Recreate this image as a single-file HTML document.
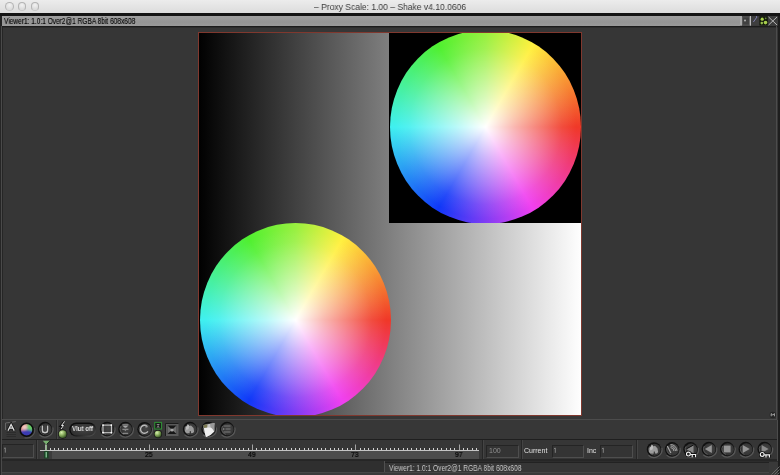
<!DOCTYPE html>
<html><head><meta charset="utf-8">
<style>
*{margin:0;padding:0;box-sizing:border-box}
html,body{width:780px;height:475px;overflow:hidden;background:#363636;font-family:"Liberation Sans",sans-serif}
.a{position:absolute}
#title{left:0;top:0;width:780px;height:13px;background:linear-gradient(#ececec,#dcdcdc)}
.tl{width:8.8px;height:8.8px;border-radius:50%;top:1.95px;background:radial-gradient(circle at 50% 30%,#f2f2f2 0,#dcdcdc 70%,#e8e8e8 100%);border:1px solid #b4b4b4;border-bottom-color:#c8c8c8}
#ttext{left:314px;top:1px;font-size:9.5px;color:#3a3a3a;white-space:nowrap;transform-origin:0 0;transform:scaleX(0.897);line-height:11px}
#blk{left:0;top:13px;width:780px;height:3px;background:#141414}
#hdr{left:2px;top:16px;width:776px;height:10px;background:linear-gradient(#a0a0a0,#959595 60%,#9a9a9a)}
#htext{left:3.5px;top:16px;font-size:8.4px;color:#000;-webkit-text-stroke:0.12px #000;white-space:nowrap;transform-origin:0 0;transform:scaleX(0.783);line-height:10px}
#view{left:0;top:26px;width:780px;height:393px;background:#363636}
#img{left:198px;top:32px;width:384px;height:384px;background:linear-gradient(90deg,#000,#fff);overflow:hidden}
#imgb{left:198px;top:32px;width:384px;height:384px;border:1px solid #80382e}
.quad{overflow:hidden}
.wheel{width:191px;height:194px;border-radius:50%;background:radial-gradient(closest-side,#fff 0%,rgba(255,255,255,.64) 30%,rgba(255,255,255,.32) 60%,rgba(255,255,255,.1) 80%,rgba(255,255,255,0) 95%),conic-gradient(#98f040 0deg,#fff040 30deg,#f03828 90deg,#f040f0 150deg,#1038f8 210deg,#40f0f0 270deg,#50f030 330deg,#98f040 360deg)}
.txt{white-space:nowrap;transform-origin:0 0}
.lab{will-change:transform}
.box{border-top:1px solid #242424;border-left:1px solid #242424;border-bottom:1px solid #4e4e4e;border-right:1px solid #4e4e4e;background:#343434}
body *{-webkit-font-smoothing:antialiased}
#ttext,#htext{will-change:transform}
</style></head><body>
<div id="title" class="a"></div>
<div class="a tl" style="left:4.8px"></div>
<div class="a tl" style="left:17.5px"></div>
<div class="a tl" style="left:30.5px"></div>
<div id="ttext" class="a">– Proxy Scale: 1.00 – Shake v4.10.0606</div>
<div id="blk" class="a"></div>
<div id="view" class="a"></div>
<div class="a" style="left:2px;top:26px;width:776px;height:1px;background:#1c1c1c"></div>
<div class="a" style="left:2px;top:27px;width:776px;height:1px;background:#2c2c2c"></div>
<div class="a" style="left:2px;top:27px;width:1px;height:392px;background:#262626"></div>
<div class="a" style="left:0;top:16px;width:2px;height:10px;background:#222"></div>
<div id="hdr" class="a"></div>
<div id="htext" class="a">Viewer1: 1.0:1 Over2@1 RGBA 8bit 608x608</div>

<div id="img" class="a">
  <div class="a" style="left:191px;top:0;width:193px;height:191px;background:#000"></div>
  <div class="a quad" style="left:191px;top:0;width:193px;height:191px">
    <div class="a wheel" style="left:0.5px;top:-2.3px"></div>
  </div>
  <div class="a quad" style="left:0;top:191px;width:194px;height:193px">
    <div class="a wheel" style="left:1.5px;top:-0.2px"></div>
  </div>
</div>
<div id="imgb" class="a"></div>

<!-- viewer bottom line -->
<div class="a" style="left:2px;top:419px;width:775px;height:1px;background:#4c4c4c"></div>
<!-- toolbar -->
<div class="a" style="left:2px;top:420px;width:776px;height:19px;background:#373737"></div>
<div class="a" style="left:0;top:439px;width:780px;height:1px;background:#1f1f1f"></div>
<!-- timeline row -->
<div class="a" style="left:2px;top:440px;width:776px;height:19px;background:#363636"></div>
<div class="a" style="left:0;top:459px;width:780px;height:2px;background:#262626"></div>
<!-- status -->
<div class="a" style="left:0;top:461px;width:780px;height:14px;background:#333"></div>
<div class="a" style="left:2px;top:461px;width:383px;height:12px;background:#2f2f2f"></div>
<div class="a" style="left:384px;top:461px;width:1px;height:12px;background:#505050"></div>
<div class="a" style="left:385px;top:461px;width:393px;height:1px;background:#2c2c2c"></div>
<div class="a" style="left:385px;top:462px;width:393px;height:1px;background:#222"></div>
<div class="a" style="left:385px;top:463px;width:393px;height:10px;background:#363636"></div>
<div class="a" style="left:0;top:472px;width:780px;height:1px;background:#464646"></div>
<div class="a" style="left:0;top:473px;width:780px;height:2px;background:#3a3a3a"></div>
<div class="a txt lab" style="left:388.5px;top:464px;font-size:8.4px;line-height:9px;color:#c8c8c8;transform:scaleX(0.79)">Viewer1: 1.0:1 Over2@1 RGBA 8bit 608x608</div>

<!-- frame boxes -->
<div class="a box" style="left:2px;top:444px;width:32px;height:14px"></div>

<div class="a" style="left:36px;top:440px;width:1px;height:19px;background:#262626"></div>
<div class="a" style="left:37px;top:440px;width:1px;height:19px;background:#444"></div>
<!-- ruler -->
<div class="a" style="left:40px;top:451px;width:439px;height:8px;background:#4c4c4c"></div>
<div class="a" style="left:40px;top:450px;width:439px;height:1px;background:#c4c4c4"></div>
<div class="a" style="left:40px;top:451px;width:12px;height:8px;background:#3c3c3c"></div>
<svg class="a" style="left:0;top:0" width="780" height="475"><path d="M50.5 448V450M54.5 448V450M58.5 448V450M63.5 448V450M67.5 448V450M71.5 448V450M76.5 448V450M80.5 448V450M84.5 448V450M88.5 448V450M93.5 448V450M97.5 448V450M101.5 448V450M106.5 448V450M110.5 448V450M114.5 448V450M119.5 448V450M123.5 448V450M127.5 448V450M131.5 448V450M136.5 448V450M140.5 448V450M144.5 448V450M153.5 448V450M157.5 448V450M162.5 448V450M166.5 448V450M170.5 448V450M175.5 448V450M179.5 448V450M183.5 448V450M187.5 448V450M192.5 448V450M196.5 448V450M200.5 448V450M205.5 448V450M209.5 448V450M213.5 448V450M218.5 448V450M222.5 448V450M226.5 448V450M231.5 448V450M235.5 448V450M239.5 448V450M243.5 448V450M248.5 448V450M256.5 448V450M261.5 448V450M265.5 448V450M269.5 448V450M274.5 448V450M278.5 448V450M282.5 448V450M286.5 448V450M291.5 448V450M295.5 448V450M299.5 448V450M304.5 448V450M308.5 448V450M312.5 448V450M317.5 448V450M321.5 448V450M325.5 448V450M330.5 448V450M334.5 448V450M338.5 448V450M342.5 448V450M347.5 448V450M351.5 448V450M360.5 448V450M364.5 448V450M368.5 448V450M373.5 448V450M377.5 448V450M381.5 448V450M386.5 448V450M390.5 448V450M394.5 448V450M398.5 448V450M403.5 448V450M407.5 448V450M411.5 448V450M416.5 448V450M420.5 448V450M424.5 448V450M429.5 448V450M433.5 448V450M437.5 448V450M441.5 448V450M446.5 448V450M450.5 448V450M454.5 448V450M463.5 448V450M467.5 448V450M472.5 448V450M476.5 448V450" stroke="#d0d0d0" stroke-width="1"/><path d="M45.5 444.5V450M149.5 444.5V450M252.5 444.5V450M355.5 444.5V450M459.5 444.5V450" stroke="#a4a4a4" stroke-width="1"/></svg>
<div class="a txt lab" style="left:144.5px;top:451px;font-size:7px;line-height:8px;color:#000;-webkit-text-stroke:0.2px #000;transform:scaleX(0.95)">25</div>
<div class="a txt lab" style="left:247.5px;top:451px;font-size:7px;line-height:8px;color:#000;-webkit-text-stroke:0.2px #000;transform:scaleX(0.95)">49</div>
<div class="a txt lab" style="left:350.5px;top:451px;font-size:7px;line-height:8px;color:#000;-webkit-text-stroke:0.2px #000;transform:scaleX(0.95)">73</div>
<div class="a txt lab" style="left:454.5px;top:451px;font-size:7px;line-height:8px;color:#000;-webkit-text-stroke:0.2px #000;transform:scaleX(0.95)">97</div>
<div class="a" style="left:482px;top:440px;width:1px;height:19px;background:#262626"></div>
<div class="a" style="left:483px;top:440px;width:1px;height:19px;background:#444"></div>
<div class="a box" style="left:486px;top:445px;width:33px;height:13px"></div>
<div class="a txt lab" style="left:489px;top:447px;font-size:7px;line-height:8px;color:#909090">100</div>
<div class="a" style="left:521px;top:440px;width:1px;height:19px;background:#262626"></div>
<div class="a" style="left:522px;top:440px;width:1px;height:19px;background:#444"></div>
<div class="a txt lab" style="left:524px;top:447px;font-size:7px;line-height:8px;color:#e0e0e0">Current</div>
<div class="a box" style="left:552px;top:445px;width:32px;height:13px"></div>

<div class="a txt lab" style="left:587px;top:447px;font-size:7px;line-height:8px;color:#e0e0e0">Inc</div>
<div class="a box" style="left:600px;top:445px;width:33px;height:13px"></div>

<div class="a" style="left:636px;top:440px;width:1px;height:19px;background:#262626"></div>
<div class="a" style="left:637px;top:440px;width:1px;height:19px;background:#444"></div>
<div class="a" style="left:56px;top:420px;width:1px;height:19px;background:#2a2a2a"></div>
<div class="a" style="left:57px;top:420px;width:1px;height:19px;background:#474747"></div>

<!-- frame lines -->
<div class="a" style="left:0;top:26px;width:2px;height:449px;background:#262626"></div>
<div class="a" style="left:1px;top:26px;width:1px;height:449px;background:#4a4a4a"></div>
<div class="a" style="left:776px;top:26px;width:1px;height:393px;background:#4c4c4c"></div>
<div class="a" style="left:777px;top:420px;width:1px;height:41px;background:#4c4c4c"></div>
<div class="a" style="left:778px;top:16px;width:2px;height:459px;background:#1e1e1e"></div>
<svg class="a" style="left:0;top:0" width="780" height="475" id="icons">
<defs>
<radialGradient id="bg" cx="55%" cy="45%" r="60%"><stop offset="0" stop-color="#464646"/><stop offset="1" stop-color="#303030"/></radialGradient>
<linearGradient id="rim" x1="0" y1="0" x2="1" y2="1"><stop offset="0.45" stop-color="#0c0c0c"/><stop offset="1" stop-color="#5a5a5a"/></linearGradient>
<radialGradient id="gball" cx="35%" cy="30%" r="70%"><stop offset="0" stop-color="#d8f0b0"/><stop offset="0.5" stop-color="#8cb060"/><stop offset="1" stop-color="#3c5a28"/></radialGradient>
<radialGradient id="csph" cx="40%" cy="30%" r="70%"><stop offset="0" stop-color="#fff" stop-opacity=".7"/><stop offset="0.6" stop-color="#fff" stop-opacity="0"/></radialGradient>
<g id="btn"><path d="M7.9 -1.5 A8 8 0 0 1 -5.5 5.8" stroke="#585858" stroke-width="1.2" fill="none"/><circle r="7.2" fill="#101010"/><circle cx="0.6" cy="0.4" r="6.1" fill="url(#bg)"/><path d="M-4.4 -3 A5.4 5.4 0 0 0 -1.2 5.3" stroke="#5a5a5a" stroke-width="1" fill="none"/></g>
<clipPath id="sphclip"><circle r="5.7"/></clipPath><filter id="bl" x="-20%" y="-20%" width="140%" height="140%"><feGaussianBlur stdDeviation="0.8"/></filter></defs>
<!-- header icons -->
<rect x="740" y="16" width="38" height="10" fill="#3c3c3c"/>
<rect x="740.2" y="16" width="1.6" height="9.7" fill="#c4c4c4"/>
<rect x="742.4" y="16.9" width="7" height="8.2" fill="#404040" stroke="#5e5e5e" stroke-width="0.8"/>
<circle cx="745" cy="20.5" r="1" fill="#b0b0b0"/>
<rect x="749.8" y="16" width="1.2" height="9.7" fill="#bdbdbd"/>
<rect x="751" y="16.5" width="8" height="8.8" fill="#3e3e3e"/>
<path d="M753.4 22 L756.8 17.2 M756.6 16 V17.5" stroke="#8484b8" stroke-width="0.9"/>
<rect x="759.4" y="16.2" width="8.4" height="9.3" fill="#141a0c"/>
<circle cx="762.2" cy="19.2" r="1.6" fill="#a8d04c"/>
<circle cx="765.7" cy="18.4" r="0.8" fill="#6c8848"/>
<circle cx="761.8" cy="23.1" r="1.3" fill="#98c04c"/>
<circle cx="765.5" cy="22.6" r="1.8" fill="#a8d04c"/>
<path d="M768.6 17 L777 25 M777 17 L768.6 25" stroke="#bcbcbc" stroke-width="0.95"/>
<!-- viewer corner icon -->
<circle cx="772.8" cy="415" r="3.2" fill="#242424"/><path d="M771.2 416.3 V413.6 L772.8 415 L774.4 413.6 V416.3" stroke="#b4b4b4" stroke-width="0.9" fill="none"/>
<!-- resize grip -->
<rect x="769" y="462" width="9" height="13" fill="#393939"/><path d="M771.5 474.5 L779.5 466.5 M774.5 474.5 L779.5 469.5 M777.5 474.5 L779.5 472.5" stroke="#6c6c6c" stroke-width="0.9"/>
<!-- A icon -->
<path d="M5.5 430 V423 L15.8 421.6" stroke="#6c6c6c" stroke-width="0.9" fill="none"/>
<path d="M6.5 432.5 H16 M6.5 434.5 H16 M6.5 436.5 H16" stroke="#2c2c2c" stroke-width="1" fill="none"/>
<path d="M8 430.6 L11.1 424.4 L14.2 430.6 M9.3 428.2 H12.9" stroke="#0c0c0c" stroke-width="2.8" fill="none"/>
<path d="M8 430.6 L11.1 424.4 L14.2 430.6 M9.3 428.2 H12.9" stroke="#dcdcdc" stroke-width="1.3" fill="none"/>
<!-- color sphere -->
<g transform="translate(26.6 429.8)">
<path d="M7.9 -2 A8.1 8.1 0 0 1 -2 7.9" stroke="#555" stroke-width="1.1" fill="none"/>
<circle r="7.3" fill="#0c0c0c"/>
<g clip-path="url(#sphclip)" filter="url(#bl)">
<rect x="-7" y="-7" width="14" height="14" fill="#3a3ab4"/>
<path d="M-7 1.2 L0.5 -0.2 L0.8 -7 L-7 -7 Z" fill="#e0887a"/>
<path d="M0.5 -0.2 L0.8 -7 L7 -7 L7 1.5 Z" fill="#66cc66"/>
<circle cx="-2" cy="-2.6" r="2.6" fill="#fff" fill-opacity="0.55"/>
</g>
</g>
<!-- U button -->
<g transform="translate(45 429)"><use href="#btn"/>
<path d="M-2.6 -3.8 V1.2 Q-2.6 3.8 0 3.8 Q2.6 3.8 2.6 1.2 V-3.8" stroke="#161616" stroke-width="2.8" fill="none"/><path d="M-2.6 -3.6 V1.2 Q-2.6 3.6 0 3.6 Q2.6 3.6 2.6 1.2 V-3.6" stroke="#c4c4c4" stroke-width="1.6" fill="none"/></g>
<!-- bolt -->
<path d="M64.5 421.5 L61.5 425.5 L63.5 425.5 L61 429" stroke="#111" stroke-width="2.2" fill="none" transform="translate(-0.7 0.4)"/>
<path d="M64.5 421.5 L61.5 425.5 L63.5 425.5 L61 429" stroke="#e8e8e8" stroke-width="1" fill="none"/>
<circle cx="62.7" cy="434.1" r="4.6" fill="#151515"/>
<circle cx="62.7" cy="434.1" r="3.9" fill="url(#gball)"/>
<!-- Vlut pill -->
<rect x="69.2" y="422.5" width="27" height="14.2" rx="7.1" fill="url(#rim)"/>
<rect x="70.6" y="423.9" width="24.2" height="11.4" rx="5.7" fill="url(#bg)"/>
<!-- square btn -->
<g transform="translate(107 429)"><use href="#btn"/>
<rect x="-4" y="-3.9" width="8.4" height="7.6" stroke="#d0d0d0" stroke-width="1" fill="none"/>
<circle cx="-4" cy="-3.9" r="0.9" fill="#fff"/><circle cx="4.4" cy="-3.9" r="0.9" fill="#fff"/><circle cx="-4" cy="3.7" r="0.9" fill="#fff"/><circle cx="4.4" cy="3.7" r="0.9" fill="#fff"/></g>
<!-- hourglass btn -->
<g transform="translate(125.4 429)"><use href="#btn"/>
<path d="M-3 -4.6 H3" stroke="#8a8a8a" stroke-width="0.9"/>
<path d="M-3.2 -3.6 H3.2 L0.6 -1.2 H-0.6 Z" fill="#a8a8a8"/>
<path d="M-3 0.3 H3 M-2.8 4.3 H2.8" stroke="#9a9a9a" stroke-width="1"/>
<path d="M-1 1 L0 2.2 L1 1 Z" fill="#888"/></g>
<!-- C btn -->
<g transform="translate(144.5 429.2)"><use href="#btn"/>
<path d="M2.6 -3 A4 4 0 1 0 3.4 2.2" stroke="#bcbcbc" stroke-width="1.4" fill="none"/>
<path d="M1.2 -4.4 L3.8 -2.2 L1 -1.4 Z" fill="#9a9a9a"/></g>
<!-- green square -->
<rect x="154.7" y="422.4" width="6.8" height="6.6" stroke="#2e8a34" stroke-width="1.1" fill="#1a1a1a"/>
<path d="M156.3 424 H160 L158.1 425.7 Z M156.3 427.5 H160 L158.1 425.8 Z" fill="#8a8a8a"/>
<circle cx="158" cy="434.1" r="4.1" fill="#151515"/>
<circle cx="158" cy="434.1" r="3.4" fill="url(#gball)"/>
<!-- box icon -->
<rect x="165.5" y="423.5" width="13" height="12.5" fill="#5a5a5a"/>
<path d="M165.5 436 V423.5 H178.5" stroke="#1c1c1c" stroke-width="1" fill="none"/>
<rect x="167.5" y="425.5" width="9" height="8.5" fill="#161616"/>
<path d="M167.5 425.5 L172 429.7 L167.5 434 Z M176.5 425.5 L172 429.7 L176.5 434 Z" fill="#6e6e6e"/>
<circle cx="172" cy="430" r="1.6" fill="#a8a8a8"/>
<!-- flame btn -->
<g transform="translate(190 429)"><use href="#btn"/>
<path d="M-5 1 L-4.5 -1.5 L-2.8 -3.2 L-2.2 -4.8 L-0.6 -3 L1 -3.6 L3.5 -1 L4.1 2.5 L3.1 4 L1.1 4.2 L0.8 2 L-0.2 2 L-0.4 4.3 L-3.5 4 L-5 2.5 Z" fill="#9c9c9c"/>
<path d="M-4.5 -1.5 L-2.8 -3.2 L-2.2 -4.8 L-0.6 -3 L-1.5 0 L-3.5 1 Z" fill="#bdbdbd"/></g>
<!-- paper btn -->
<g transform="translate(208.5 429)"><use href="#btn"/>
<path d="M-5 -4 L6 -6 L5.6 2.6 Q3 6 -2.4 8 L-3.4 5 Q-4.8 0 -5 -4 Z" fill="#c4c4c4"/>
<path d="M-4.4 -1 Q0 -2.4 5.6 -0.5 L5.6 2.6 Q3 6 -2.4 8 L-3.4 5 Q-4 2 -4.4 -1 Z" fill="#eeeeee"/>
<path d="M1.5 -5.3 L6 -6 L5.6 2.6 Q4.5 0 2 -2 Z" fill="#9a9a9a"/>
<path d="M-5 -4 L-1 -4.7 L-1.3 -1.6 L-4.5 -1 Z" fill="#7c7a52"/></g>
<!-- lines btn -->
<g transform="translate(227 429)"><use href="#btn"/>
<path d="M-3.5 -3 H3.5 M-1.5 0 H3.5 M-3.5 3 H3.5" stroke="#7c7c7c" stroke-width="1.1"/>
<path d="M-4.2 -1.6 L-2 0 L-4.2 1.6 Z" fill="#7c7c7c"/></g>

<!-- ones --><path d="M5.3 447.6 V452.6 M5.0 447.8 L3.9 448.8" stroke="#8c8c8c" stroke-width="0.9" fill="none"/><path d="M555.3 447.8 V452.8 M555.0 448.0 L553.9 449.0" stroke="#8c8c8c" stroke-width="0.9" fill="none"/><path d="M603.3 447.8 V452.8 M603.0 448.0 L601.9 449.0" stroke="#8c8c8c" stroke-width="0.9" fill="none"/>
<!-- timeline marker -->
<rect x="44" y="451" width="4.6" height="7.5" fill="#1c4426"/>
<path d="M42.8 440.8 H50 L46.3 444.8 Z" fill="#78b070"/>
<path d="M50 440.8 L46.3 444.8" stroke="#1c2a1c" stroke-width="1"/>
<rect x="45.8" y="444.5" width="1" height="6" fill="#a8d8a0"/>
<rect x="45.6" y="452" width="1.2" height="5.5" fill="#90d0a0"/>

<!-- transport -->
<g transform="translate(654 449.4)"><use href="#btn"/>
<path d="M-5 1 L-4.5 -1.5 L-2.8 -3.2 L-2.2 -4.8 L-0.6 -3 L1 -3.6 L3.5 -1 L4.1 2.5 L3.1 4 L1.1 4.2 L0.8 2 L-0.2 2 L-0.4 4.3 L-3.5 4 L-5 2.5 Z" fill="#9c9c9c"/>
<path d="M-4.5 -1.5 L-2.8 -3.2 L-2.2 -4.8 L-0.6 -3 L-1.5 0 L-3.5 1 Z" fill="#bdbdbd"/></g>
<g transform="translate(672.1 449.3)"><use href="#btn"/>
<path d="M-1.6 -4.8 A6.5 6.5 0 0 1 4.9 1.7 M-1.6 -3.3 A5 5 0 0 1 3.4 1.7 M-1.6 -1.7 A3.4 3.4 0 0 1 1.8 1.7" stroke="#a4a4a4" stroke-width="1" fill="none"/>
<path d="M-4.8 -3.2 L-1.2 3.8" stroke="#a8a8a8" stroke-width="1.2"/></g>
<g transform="translate(690.5 449.3)"><use href="#btn"/>
<path d="M-4 0 L3 -4 V4 Z" fill="#8a8a8a"/>
<path d="M-4 -0.5 L3 -4.3" stroke="#111" stroke-width="1"/></g>
<g transform="translate(708.8 449)"><use href="#btn"/>
<path d="M-4 0 L3 -4 V4 Z" fill="#959595"/></g>
<g transform="translate(727.2 449)"><use href="#btn"/>
<rect x="-3.4" y="-3.4" width="6.8" height="6.8" fill="#959595"/></g>
<g transform="translate(745.7 449)"><use href="#btn"/>
<path d="M4 0 L-3 -4 V4 Z" fill="#959595"/></g>
<g transform="translate(764.6 449)"><use href="#btn"/>
<path d="M4 0 L-3 -4 V4 Z" fill="#8a8a8a"/></g>
<!-- keys -->
<g stroke="#0a0a0a" stroke-width="2.6" fill="none"><circle cx="688.4" cy="454.1" r="1.9"/><path d="M690.5 454.5 H696.1999999999999 M692.1999999999999 454.5 V457.3 M695.6 454.5 V457.3"/></g><g stroke="#f2f2f2" stroke-width="1.2" fill="none"><circle cx="688.4" cy="454.1" r="1.9"/><path d="M690.5 454.5 H696.1999999999999 M692.1999999999999 454.5 V457.3 M695.6 454.5 V457.3"/></g>
<g stroke="#0a0a0a" stroke-width="2.6" fill="none"><circle cx="762.2" cy="454.4" r="1.9"/><path d="M764.3000000000001 454.79999999999995 H770.0 M766.0 454.79999999999995 V457.59999999999997 M769.4000000000001 454.79999999999995 V457.59999999999997"/></g><g stroke="#f2f2f2" stroke-width="1.2" fill="none"><circle cx="762.2" cy="454.4" r="1.9"/><path d="M764.3000000000001 454.79999999999995 H770.0 M766.0 454.79999999999995 V457.59999999999997 M769.4000000000001 454.79999999999995 V457.59999999999997"/></g>
</svg>
<div class="a txt lab" style="left:72px;top:424.5px;font-size:7px;line-height:8px;font-weight:bold;color:#e2e2e2;transform:scaleX(0.87)">Vlut off</div>
</body></html>
